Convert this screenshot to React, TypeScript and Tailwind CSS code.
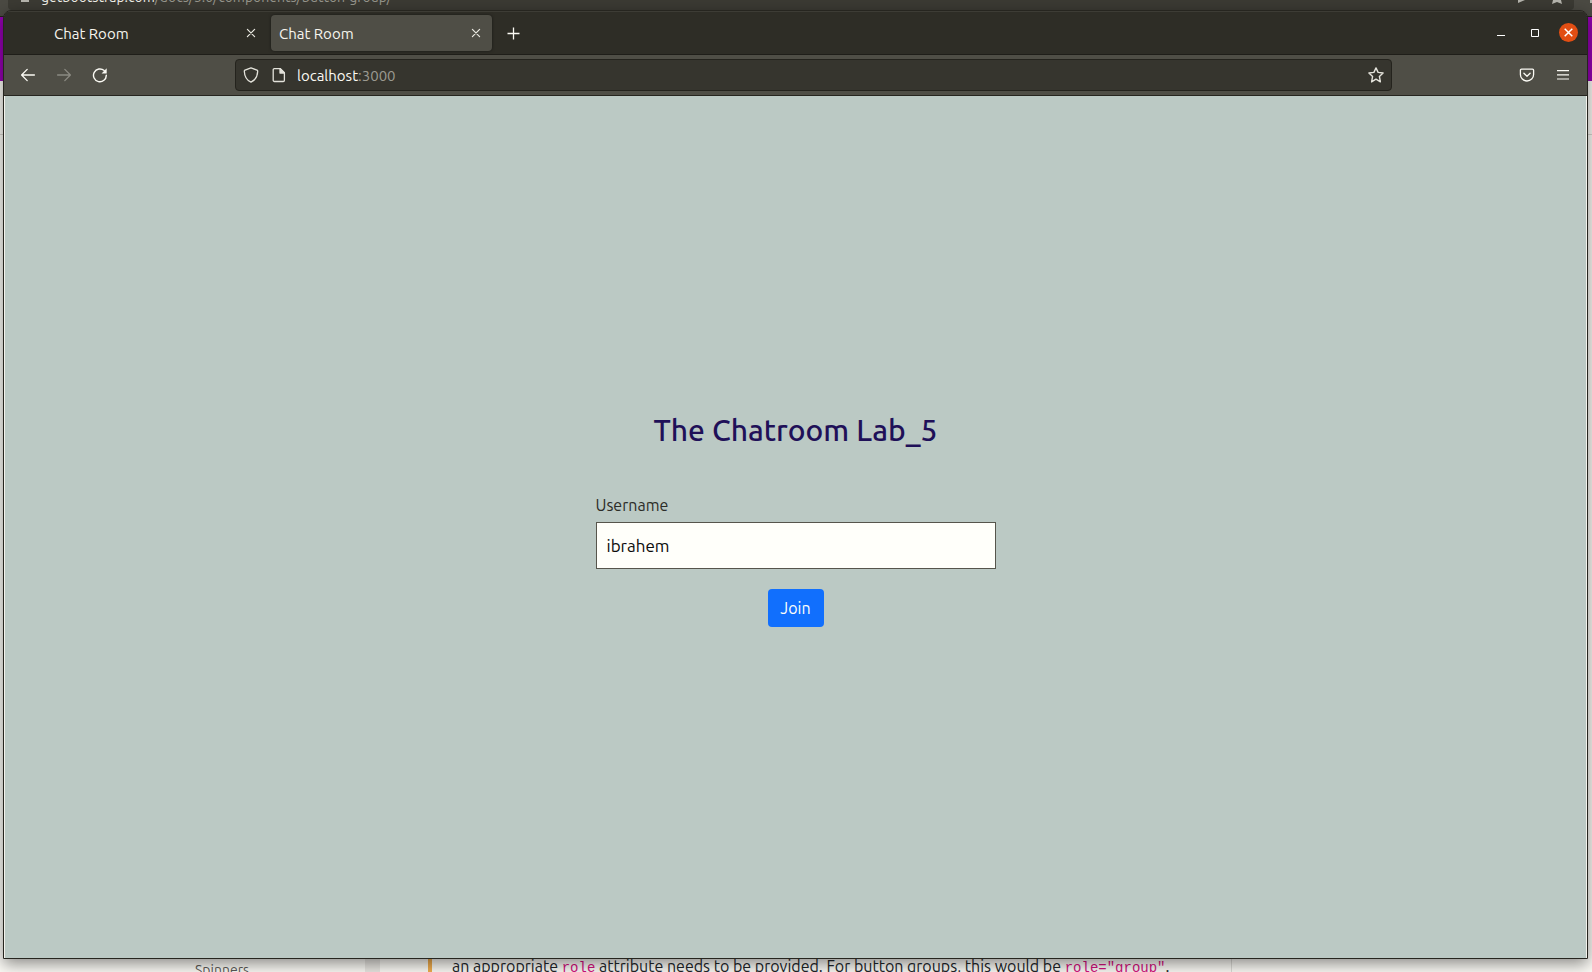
import React, { useState } from "react";

const FONT = "font-['Ubuntu','Noto_Sans',sans-serif]";

function CloseGlyph() {
  return (
    <svg width="10" height="10" viewBox="0 0 10 10" fill="none" stroke="currentColor" strokeWidth="1.2" strokeLinecap="round" aria-hidden="true">
      <path d="M1.4 1.4 8.6 8.6M8.6 1.4 1.4 8.6" />
    </svg>
  );
}

function Tab({ title, active }: { title: string; active?: boolean }) {
  return (
    <div
      className={
        active
          ? "flex h-9 w-[221px] items-center justify-between rounded bg-[#4f4e46] pr-[11px] pl-2 shadow-[0_0_3px_rgba(0,0,0,0.5)]"
          : "flex h-9 w-[221px] items-center justify-between pr-[11px] pl-2"
      }
    >
      <button type="button" className="flex-1 pt-[2px] text-left text-[15px] leading-5 text-[#f6f5ee]">{title}</button>
      <button type="button" aria-label="Close tab" className="text-[#e8e7df]">
        <CloseGlyph />
      </button>
    </div>
  );
}

function TitleBar() {
  return (
    <div className="flex h-11 shrink-0 items-center border-b border-[#1f1e19] bg-[#2e2d26] pr-[9px] shadow-[inset_0_1px_0_#3d3c35]">
      <div className="flex items-center gap-1 pl-[42px]">
        <Tab title="Chat Room" />
        <Tab title="Chat Room" active />
      </div>
      <button type="button" aria-label="New tab" className="ml-[15px] pt-px text-[#fbfaf4]">
        <svg width="13" height="13" viewBox="0 0 13 13" fill="none" stroke="currentColor" strokeWidth="1.3" aria-hidden="true">
          <path d="M6.5 .5v12M.5 6.5h12" />
        </svg>
      </button>
      <div className="ml-auto flex items-center gap-[15px]">
        <button type="button" aria-label="Minimize" className="text-white">
          <svg width="18" height="18" viewBox="0 0 18 18" fill="currentColor" aria-hidden="true">
            <path d="M4 11h8v1H4z" />
          </svg>
        </button>
        <button type="button" aria-label="Maximize" className="text-white">
          <svg width="18" height="18" viewBox="0 0 18 18" fill="none" stroke="currentColor" aria-hidden="true">
            <path d="M5.500 5.500h7v7h-7z" />
          </svg>
        </button>
        <button type="button" aria-label="Close window" className="flex size-[19px] items-center justify-center rounded-full bg-[#e24e13] text-white">
          <svg width="9" height="9" viewBox="0 0 9 9" fill="none" stroke="currentColor" strokeWidth="1.5" aria-hidden="true">
            <path d="M.7.7 8.3 8.3M8.3.7.7 8.3" />
          </svg>
        </button>
      </div>
    </div>
  );
}

function ArrowIcon() {
  return (
    <svg width="16" height="16" viewBox="0 0 16 16" fill="none" stroke="currentColor" strokeWidth="1.3" strokeLinecap="round" strokeLinejoin="round" aria-hidden="true">
      <path d="M14.4 8H1.8M7.2 2.4 1.6 8l5.600 5.600" />
    </svg>
  );
}

function ToolBar() {
  return (
    <div className="flex h-[41px] shrink-0 items-center border-b border-[#26251f] bg-[#4f4e46] px-4 text-[#fbfaf4]">
      <div className="flex w-[215px] items-center gap-5">
        <button type="button" aria-label="Back"><ArrowIcon /></button>
        <button type="button" aria-label="Forward" className="rotate-180 text-[#8b8a82]"><ArrowIcon /></button>
        <button type="button" aria-label="Reload">
          <svg width="16" height="16" viewBox="0 0 16 16" fill="none" stroke="currentColor" strokeWidth="1.4" aria-hidden="true">
            <path d="M14.3 8.200A6.400 6.400 0 1 1 12.200 3.600" strokeLinecap="round" />
            <path d="M14.700 1.300v5.100H9.600z" fill="currentColor" stroke="none" />
          </svg>
        </button>
      </div>
      <div className="flex h-8 flex-1 items-center rounded border border-[#24231d] bg-[#36352e] pr-[6px] pl-[7px]">
        <svg width="16" height="16" viewBox="0 0 16 16" fill="none" stroke="#e3e2da" strokeWidth="1.300" strokeLinejoin="round" aria-hidden="true">
          <path d="M8 .8 14 3.200c.5.2.7.5.7 1-.2 5.200-2.300 8.900-6.700 11C3.600 13.100 1.500 9.400 1.300 4.200c0-.5.2-.8.7-1z" />
        </svg>
        <svg className="ml-3" width="16" height="16" viewBox="0 0 16 16" fill="none" stroke="#e3e2da" strokeWidth="1.300" strokeLinejoin="round" aria-hidden="true">
          <path d="M3.400 1.600h6l4 4v7.700a1.200 1.200 0 0 1-1.200 1.200H3.400a1.200 1.200 0 0 1-1.200-1.200V2.800a1.200 1.200 0 0 1 1.200-1.200z" />
          <path d="M9 1.600v4.400h4.400z" fill="#e3e2da" />
        </svg>
        <a href="#address" className="ml-[10px] flex-1 pt-px text-[15px] leading-5 text-[#fbfaf4]">
          localhost<span className="text-[#9b9a91]">:3000</span>
        </a>
        <button type="button" aria-label="Bookmark this page" className="text-[#e3e2da]">
          <svg width="18" height="18" viewBox="0 0 18 18" fill="none" stroke="currentColor" strokeWidth="1.400" strokeLinejoin="round" aria-hidden="true">
            <path d="m9 1.900 2.100 4.500 5 .6-3.700 3.400 1 5.500L9 13.200l-4.400 2.700 1-5.500L1.900 7l5-.6z" />
          </svg>
        </button>
      </div>
      <div className="flex w-[179px] items-center justify-end gap-5">
        <button type="button" aria-label="Save to Pocket">
          <svg width="16" height="16" viewBox="0 0 16 16" fill="none" stroke="currentColor" strokeWidth="1.300" strokeLinecap="round" strokeLinejoin="round" aria-hidden="true">
            <path d="M2.500 2.200h11a1.100 1.100 0 0 1 1.100 1.100v4.100a6.600 6.600 0 0 1-13.200 0V3.300a1.100 1.100 0 0 1 1.100-1.100z" />
            <path d="M4.900 6.200 8 9.200l3.100-3" />
          </svg>
        </button>
        <button type="button" aria-label="Open menu">
          <svg width="16" height="16" viewBox="0 0 16 16" fill="currentColor" aria-hidden="true">
            <path d="M2 3h12v1.200H2zM2 7.200h12v1.200H2zM2 11.400h12v1.200H2z" />
          </svg>
        </button>
      </div>
    </div>
  );
}

function JoinForm() {
  const [name, setName] = useState("ibrahem");
  return (
    <form className="flex w-[400px] flex-col pb-4" onSubmit={(e) => e.preventDefault()}>
      <h1 className="mb-11 text-center font-['Ubuntu_Medium','Ubuntu','Noto_Sans',sans-serif] text-[30px] leading-[38px] font-medium text-[#1f1058]">The Chatroom Lab_5</h1>
      <label htmlFor="username" className="mb-[5px] text-base leading-6 text-[#2b2c27]">Username</label>
      <input
        id="username"
        value={name}
        onChange={(e) => setName(e.target.value)}
        className="h-[47px] border border-[#56554c] bg-[#fffffa] px-[10px] text-[17px] text-[#0b0b0a] outline-none"
      />
      <button type="submit" className="mt-5 h-[38px] w-14 self-center rounded bg-[#116ffd] text-base text-[#fffffa]">Join</button>
    </form>
  );
}

function BackgroundPage() {
  return (
    <div className="absolute inset-0 flex flex-col justify-between bg-[#fbfaf5]" aria-hidden="true">
      <div>
        <div className="flex h-[17px] items-start overflow-hidden border-b border-[#24231d] bg-[#4b4a43]">
          <div className="ml-2 flex h-[10px] flex-1 items-start rounded-b bg-[#3b3a33] pl-[13px]">
            <span className="h-[2px] w-2 bg-[#b5b4ad]" />
            <span className="-mt-3 ml-3 flex-1 text-sm leading-[18px] text-[#97968d]">
              <span className="text-[#f0efe8]">getbootstrap.com</span>/docs/5.0/components/button-group/
            </span>
            <svg width="62" height="4" viewBox="0 0 62 4" fill="#b5b4ad" className="mr-2">
              <path d="M14 0h7l-7 3zM49 0h8l1 4-5-2-5 2z" />
            </svg>
          </div>
          <div className="flex w-[18px] justify-end">
            <span className="h-[3px] w-[2px] bg-[#b5b4ad]" />
          </div>
        </div>
        <div className="h-16 bg-[#9400b2]" />
        <div className="h-[54px] border-b border-[#d8d5cf] bg-[#fbfaf5]" />
      </div>
      <div className="flex h-5 overflow-hidden">
        <span className="w-[365px] pt-2 pl-[195px] text-sm leading-5 text-[#5c5b57]">Spinners</span>
        <span className="w-[15px] bg-[#e9e7e2]" />
        <span className="ml-12 w-1 bg-[#f0ad4e]" />
        <p className="w-[800px] shrink-0 border-r border-[#dddcd7] pl-5 text-base leading-7 whitespace-nowrap text-[#212529]">
          an appropriate <code className="font-['Liberation_Mono',monospace] text-sm text-[#d6117f]">role</code> attribute needs to be provided. For button groups, this would be{" "}
          <code className="font-['Liberation_Mono',monospace] text-sm text-[#d6117f]">role="group"</code>.
        </p>
      </div>
    </div>
  );
}

export default function App() {
  return (
    <div className={`relative flex h-screen flex-col overflow-hidden ${FONT}`}>
      <BackgroundPage />
      <div className="relative mt-[10px] mr-1 mb-[13px] ml-[3px] flex flex-1 flex-col overflow-hidden rounded-t-lg border border-[#26251f] shadow-[0_5px_16px_0_rgba(0,0,0,0.45)]">
        <TitleBar />
        <ToolBar />
        <main className="flex flex-1 items-center justify-center border-x border-[#f3f2ec] bg-[#bbc9c4]">
          <JoinForm />
        </main>
      </div>
    </div>
  );
}
